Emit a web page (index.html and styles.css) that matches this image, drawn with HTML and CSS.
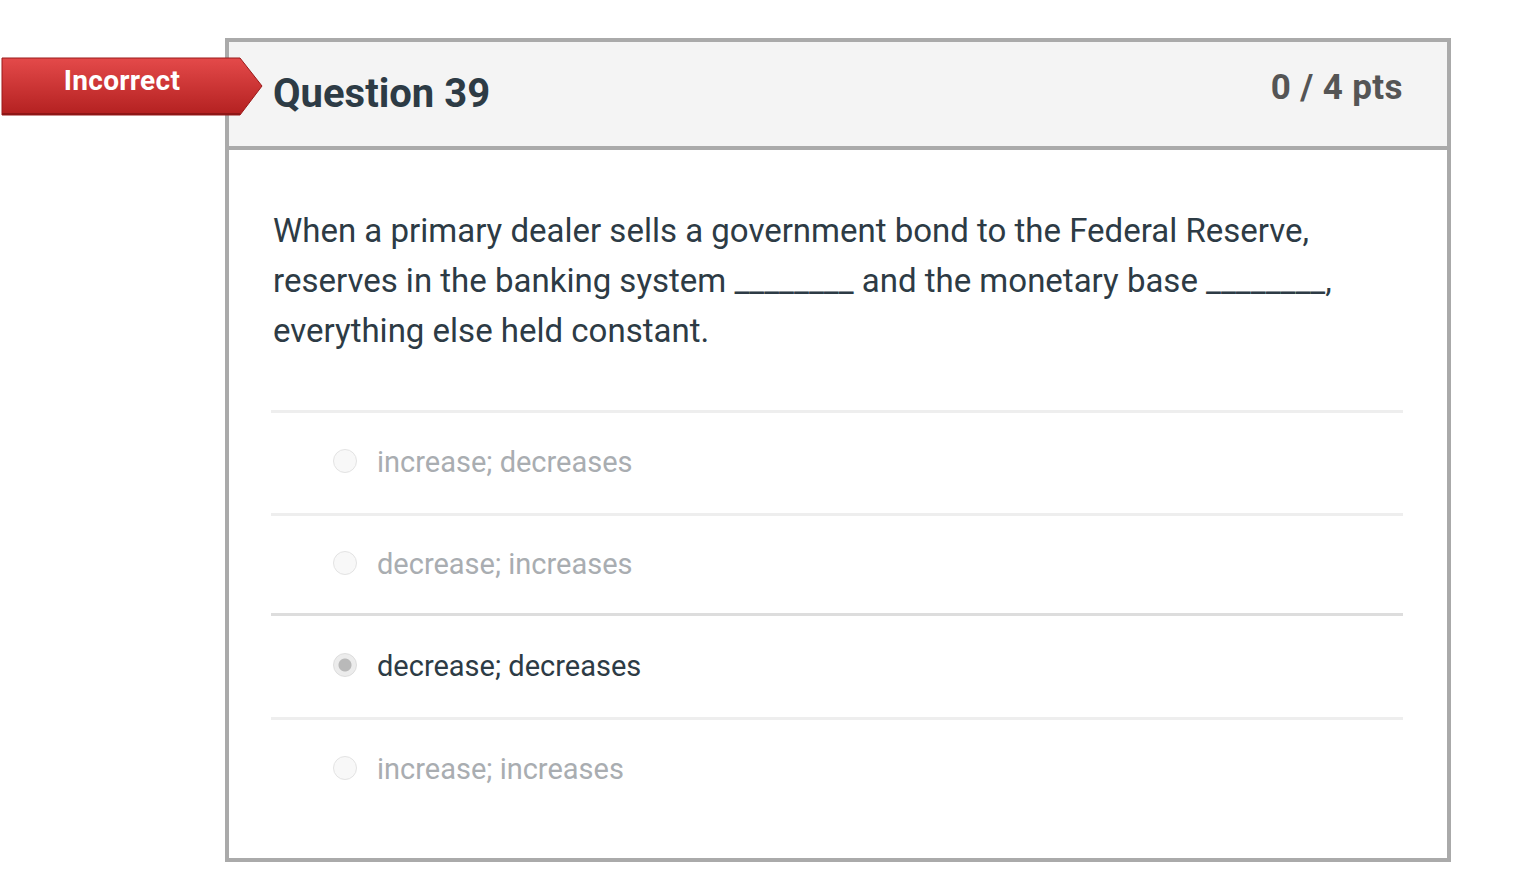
FILE: index.html
```html
<!DOCTYPE html>
<html>
<head>
<meta charset="utf-8">
<link rel="stylesheet" href="styles.css">
</head>
<body>
<div class="page">
  <div class="badge">
    <svg class="badge-shape" width="264" height="60" viewBox="0 0 264 60">
      <defs>
        <linearGradient id="g" x1="0" y1="0" x2="0" y2="1">
          <stop offset="0" stop-color="#e44a4a"/>
          <stop offset="1" stop-color="#b32020"/>
        </linearGradient>
      </defs>
      <polygon points="2,1 240,1 262,29 240,58 2,58" fill="url(#g)" stroke="#9a1a1a" stroke-width="1"/>
      <rect x="2" y="56" width="238" height="2" fill="#8e1616"/>
    </svg>
    <span class="badge-text">Incorrect</span>
  </div>
  <div class="question">
    <div class="q-header">
      <h2 class="q-title">Question 39</h2>
      <div class="q-pts">0 / 4 pts</div>
    </div>
    <div class="q-body">
      <p class="q-text">When a primary dealer sells a government bond to the Federal Reserve, reserves in the banking system ________ and the monetary base ________, everything else held constant.</p>
      <div class="answers">
        <div class="answer"><span class="radio"></span><span class="a-text">increase; decreases</span></div>
        <div class="answer"><span class="radio"></span><span class="a-text">decrease; increases</span></div>
        <div class="answer selected"><span class="radio"></span><span class="a-text">decrease; decreases</span></div>
        <div class="answer"><span class="radio"></span><span class="a-text">increase; increases</span></div>
      </div>
    </div>
  </div>
</div>
</body>
</html>
```
FILE: styles.css
```css
html, body {
  margin: 0;
  padding: 0;
  background: #ffffff;
}
body {
  font-family: Roboto, "Liberation Sans", sans-serif;
  color: #2d3b45;
}
.page {
  position: relative;
  padding: 38px 0 0 225px;
}
.badge {
  position: absolute;
  left: 0;
  top: 57px;
  width: 264px;
  height: 60px;
}
.badge-shape {
  position: absolute;
  left: 0;
  top: 0;
}
.badge-text {
  position: absolute;
  left: 2px;
  width: 240px;
  top: 7px;
  text-align: center;
  color: #ffffff;
  font-weight: 700;
  font-size: 28px;
  letter-spacing: 0.3px;
  line-height: 34px;
}
.question {
  width: 1218px;
  border: 4px solid #aaaaaa;
  height: 816px;
}
.q-header {
  background: #f4f4f4;
  border-bottom: 4px solid #aaaaaa;
  height: 104px;
  padding: 0 44px;
  display: flex;
  justify-content: space-between;
  align-items: flex-start;
}
.q-title {
  margin: 29px 0 0 0;
  font-size: 40px;
  line-height: 46px;
  font-weight: 700;
  color: #2d3b45;
}
.q-pts {
  margin-top: 26px;
  font-size: 35px;
  line-height: 40px;
  letter-spacing: 0.4px;
  font-weight: 700;
  color: #555555;
}
.q-body {
  padding: 0 44px 0 44px;
}
.q-text {
  margin: 56px 0 0 0;
  font-size: 33px;
  line-height: 50px;
  color: #2d3b45;
  padding-right: 40px;
}
.answers {
  margin-top: 54px;
  margin-left: -2px;
}
.answer {
  border-top: 3px solid #eeeeee;
  height: 100px;
  display: flex;
  align-items: center;
  padding-left: 62px;
  color: #a9adb1;
  font-size: 29px;
}
.answer:nth-child(1) {
  height: 100px;
}
.answer:nth-child(2) {
  height: 97px;
}
.answer:nth-child(3) {
  border-top-color: #dddddd;
  height: 101px;
}
.radio {
  width: 24px;
  height: 24px;
  border-radius: 50%;
  border: 1px solid #e3e3e3;
  background: #f8f8f8;
  margin-right: 20px;
  margin-top: -4px;
  flex: none;
  box-sizing: border-box;
}
.a-text {
  margin-top: -2px;
}
.selected {
  color: #2d3b45;
}
.selected .radio {
  background: radial-gradient(circle, #b9b9b9 0 6px, #ececec 7px);
  border-color: #dddddd;
}
```
